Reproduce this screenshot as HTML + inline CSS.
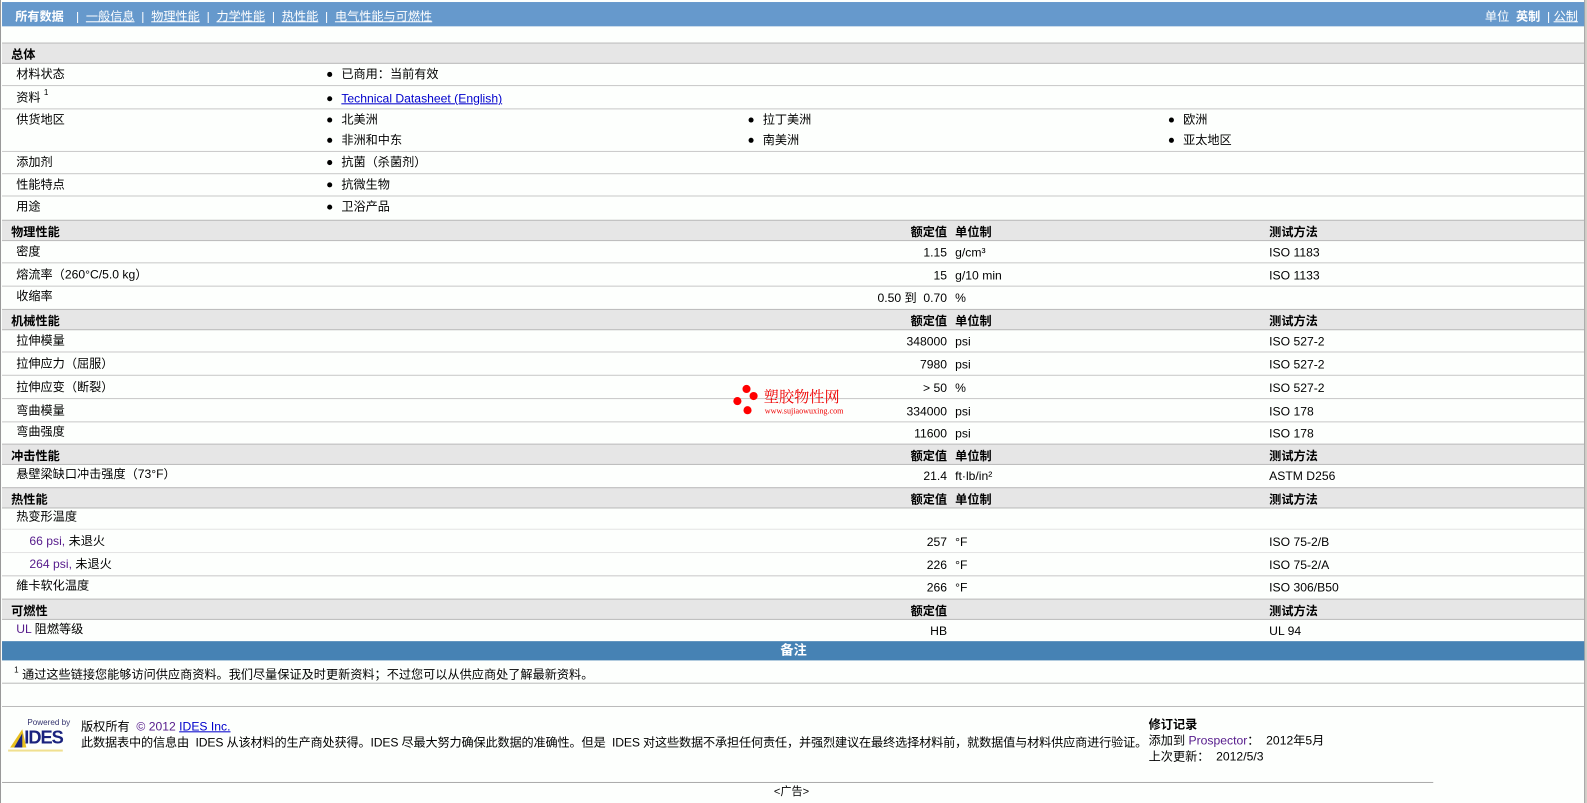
<!DOCTYPE html>
<html><head><meta charset="utf-8"><style>
html,body{margin:0;padding:0;overflow:hidden}
body{background:#d4d0c8;font-family:"Liberation Sans","Noto Sans CJK SC",sans-serif;font-size:12px;color:#000}
#wrap{position:relative;width:1587px;height:803px;overflow:hidden;transform:scale(1.0129);transform-origin:0 0}
#pg{position:absolute;left:0;top:0;width:1565px;height:803px;background:#fdfffd;border-left:1px solid #999;border-right:1px solid #999;box-sizing:border-box;overflow:hidden}
.a{position:absolute;white-space:nowrap}
.r{position:absolute;left:1px;right:0;border-bottom:1px solid #c8c8c8;overflow:hidden}
.h{background:#e6e6e6;border-top:1px solid #bbb;border-bottom:1px solid #bbb;font-weight:bold}
.h span{position:absolute;top:2px}
.r span{position:absolute;top:4px;line-height:14px}
.b::before{content:"";position:absolute;left:-14px;top:5px;width:5px;height:5px;border-radius:50%;background:#000}
a{color:#00c;text-decoration:underline}
sup{font-size:8px;line-height:0;vertical-align:6px}
</style></head><body><div id="wrap">
<div id="pg">
<div class="a" style="left:1px;top:2px;width:1563px;height:24px;background:#6699cc;color:#fff;font-size:12px">
<span class="a" style="left:13px;top:5px;font-weight:bold">所有数据</span>
<span class="a" style="left:73px;top:5px">|&nbsp; <u>一般信息</u> &nbsp;| &nbsp;<u>物理性能</u> &nbsp;| &nbsp;<u>力学性能</u> &nbsp;| &nbsp;<u>热性能</u> &nbsp;| &nbsp;<u>电气性能与可燃性</u></span>
<span class="a" style="left:1464px;top:5px">单位 &nbsp;<b>英制</b> &nbsp;| <u>公制</u></span>
</div>

<div class="r h" style="top:42px;height:19px"><span style="left:9px">总体</span></div>
<div class="r" style="top:62px;height:22px"><span style="left:14px">材料状态</span><span class="b" style="left:335px">已商用：当前有效</span></div>
<div class="r" style="top:85px;height:22px"><span style="left:14px">资料 <sup>1</sup></span><span class="b" style="left:335px;top:5px"><a>Technical Datasheet (English)</a></span></div>
<div class="r" style="top:108px;height:41px"><span style="left:14px;top:3px">供货地区</span>
<span class="b" style="left:335px;top:3px">北美洲</span><span class="b" style="left:751px;top:3px">拉丁美洲</span><span class="b" style="left:1166px;top:3px">欧洲</span>
<span class="b" style="left:335px;top:23px">非洲和中东</span><span class="b" style="left:751px;top:23px">南美洲</span><span class="b" style="left:1166px;top:23px">亚太地区</span></div>
<div class="r" style="top:150px;height:21px"><span style="left:14px;top:3px">添加剂</span><span class="b" style="left:335px;top:3px">抗菌（杀菌剂）</span></div>
<div class="r" style="top:172px;height:21px"><span style="left:14px;top:3px">性能特点</span><span class="b" style="left:335px;top:3px">抗微生物</span></div>
<div class="r" style="top:194px;height:22px;border:0"><span style="left:14px;top:3px">用途</span><span class="b" style="left:335px;top:3px">卫浴产品</span></div>

<div class="r h" style="top:217px;height:19px"><span style="left:9px">物理性能</span><span style="right:629px">额定值</span><span style="left:941px">单位制</span><span style="left:1251px">测试方法</span></div>
<div class="r" style="top:237px;height:22px"><span style="left:14px">密度</span><span style="right:629px;top:5px">1.15</span><span style="left:941px;top:5px">g/cm³</span><span style="left:1251px;top:5px">ISO 1183</span></div>
<div class="r" style="top:260px;height:22px"><span style="left:14px">熔流率（260°C/5.0 kg）</span><span style="right:629px;top:5px">15</span><span style="left:941px;top:5px">g/10 min</span><span style="left:1251px;top:5px">ISO 1133</span></div>
<div class="r" style="top:283px;height:21px;border:0"><span style="left:14px;top:2px">收缩率</span><span style="right:629px;top:4px">0.50 到 &nbsp;0.70</span><span style="left:941px;top:4px">%</span></div>

<div class="r h" style="top:305px;height:19px"><span style="left:9px">机械性能</span><span style="right:629px">额定值</span><span style="left:941px">单位制</span><span style="left:1251px">测试方法</span></div>
<div class="r" style="top:325px;height:22px"><span style="left:14px">拉伸模量</span><span style="right:629px;top:5px">348000</span><span style="left:941px;top:5px">psi</span><span style="left:1251px;top:5px">ISO 527-2</span></div>
<div class="r" style="top:348px;height:22px"><span style="left:14px">拉伸应力（屈服）</span><span style="right:629px;top:5px">7980</span><span style="left:941px;top:5px">psi</span><span style="left:1251px;top:5px">ISO 527-2</span></div>
<div class="r" style="top:371px;height:22px"><span style="left:14px">拉伸应变（断裂）</span><span style="right:629px;top:5px">&gt; 50</span><span style="left:941px;top:5px">%</span><span style="left:1251px;top:5px">ISO 527-2</span></div>
<div class="r" style="top:394px;height:22px"><span style="left:14px">弯曲模量</span><span style="right:629px;top:5px">334000</span><span style="left:941px;top:5px">psi</span><span style="left:1251px;top:5px">ISO 178</span></div>
<div class="r" style="top:417px;height:20px;border:0"><span style="left:14px;top:2px">弯曲强度</span><span style="right:629px;top:4px">11600</span><span style="left:941px;top:4px">psi</span><span style="left:1251px;top:4px">ISO 178</span></div>

<div class="r h" style="top:438px;height:19px"><span style="left:9px">冲击性能</span><span style="right:629px">额定值</span><span style="left:941px">单位制</span><span style="left:1251px">测试方法</span></div>
<div class="r" style="top:459px;height:21px;border:0"><span style="left:14px;top:2px">悬壁梁缺口冲击强度（73°F）</span><span style="right:629px">21.4</span><span style="left:941px">ft·lb/in²</span><span style="left:1251px">ASTM D256</span></div>

<div class="r h" style="top:481px;height:19px"><span style="left:9px">热性能</span><span style="right:629px">额定值</span><span style="left:941px">单位制</span><span style="left:1251px">测试方法</span></div>
<div class="r" style="top:501px;height:21px;border-color:#e4e4e4"><span style="left:14px;top:2px">热变形温度</span></div>
<div class="r" style="top:523px;height:22px;border-color:#e4e4e4"><span style="left:27px"><span style="position:static;color:#551a8b">66 psi,</span> 未退火</span><span style="right:629px;top:5px">257</span><span style="left:941px;top:5px">°F</span><span style="left:1251px;top:5px">ISO 75-2/B</span></div>
<div class="r" style="top:546px;height:22px"><span style="left:27px"><span style="position:static;color:#551a8b">264 psi,</span> 未退火</span><span style="right:629px;top:5px">226</span><span style="left:941px;top:5px">°F</span><span style="left:1251px;top:5px">ISO 75-2/A</span></div>
<div class="r" style="top:569px;height:21px;border:0"><span style="left:14px;top:2px">維卡软化温度</span><span style="right:629px">266</span><span style="left:941px">°F</span><span style="left:1251px">ISO 306/B50</span></div>

<div class="r h" style="top:591px;height:19px"><span style="left:9px">可燃性</span><span style="right:629px">额定值</span><span style="left:1251px">测试方法</span></div>
<div class="r" style="top:611px;height:22px;border:0"><span style="left:14px;top:3px"><span style="position:static;color:#551a8b">UL</span> 阻燃等级</span><span style="right:629px;top:5px">HB</span><span style="left:1251px;top:5px">UL 94</span></div>

<div class="a" style="left:1px;top:633px;width:1563px;height:19px;background:#4682b4;color:#fff;font-weight:bold;text-align:center;line-height:18px;font-size:13px">备注</div>
<div class="a" style="left:13px;top:657px"><sup>1</sup> 通过这些链接您能够访问供应商资料。我们尽量保证及时更新资料；不过您可以从供应商处了解最新资料。</div>
<div class="a" style="left:1px;top:674px;width:1563px;border-top:1px solid #bbb"></div>
<div class="a" style="left:1px;top:697px;width:1563px;border-top:1px solid #bbb"></div>

<div class="a" style="left:7px;top:718px;width:54px;height:22px">
<span class="a" style="left:19px;top:-9px;font-size:8px;color:#33336e">Powered by</span>
<svg class="a" style="left:0;top:0" width="20" height="22"><polygon points="2,20 14,2 18,20" fill="#e8c020"/><polygon points="6,20 14,6 14,20" fill="#1a237e"/></svg>
<span class="a" style="left:16px;top:0px;font-size:18px;font-weight:bold;color:#1a237e;letter-spacing:-1px">IDES</span>
<div class="a" style="left:0;top:22px;width:54px;border-top:2px solid #f0e090"></div>
</div>
<div class="a" style="left:79px;top:708px">版权所有 &nbsp;<span style="color:#551a8b">© 2012</span> <a>IDES Inc.</a></div>
<div class="a" style="left:79px;top:724px;letter-spacing:-0.15px">此数据表中的信息由 &nbsp;IDES 从该材料的生产商处获得。IDES 尽最大努力确保此数据的准确性。但是 &nbsp;IDES 对这些数据不承担任何责任，并强烈建议在最终选择材料前，就数据值与材料供应商进行验证。</div>
<div class="a" style="left:1133px;top:706px;font-weight:bold">修订记录</div>
<div class="a" style="left:1133px;top:722px">添加到 <span style="color:#551a8b">Prospector</span>： &nbsp;2012年5月</div>
<div class="a" style="left:1133px;top:738px">上次更新： &nbsp;2012/5/3</div>
<div class="a" style="left:1px;top:772px;width:1413px;border-top:1px solid #aaa"></div>
<div class="a" style="left:763px;top:773px;font-size:11px">&lt;广告&gt;</div>

<div class="a" style="left:722px;top:378px;width:140px;height:36px">
<div class="a" style="left:10px;top:2px;width:8px;height:8px;border-radius:50%;background:#f00"></div>
<div class="a" style="left:17px;top:9px;width:8px;height:8px;border-radius:50%;background:#f00"></div>
<div class="a" style="left:1px;top:14px;width:8px;height:8px;border-radius:50%;background:#f00"></div>
<div class="a" style="left:11px;top:23px;width:8px;height:8px;border-radius:50%;background:#f00"></div>
<span class="a" style="left:31px;top:3px;font-size:15px;color:#e00;font-family:'Noto Serif CJK SC',serif">塑胶物性网</span>
<span class="a" style="left:32px;top:23px;font-size:8px;color:#e00;font-family:'Liberation Serif',serif">www.sujiaowuxing.com</span>
</div>
</div>
</div></body></html>
